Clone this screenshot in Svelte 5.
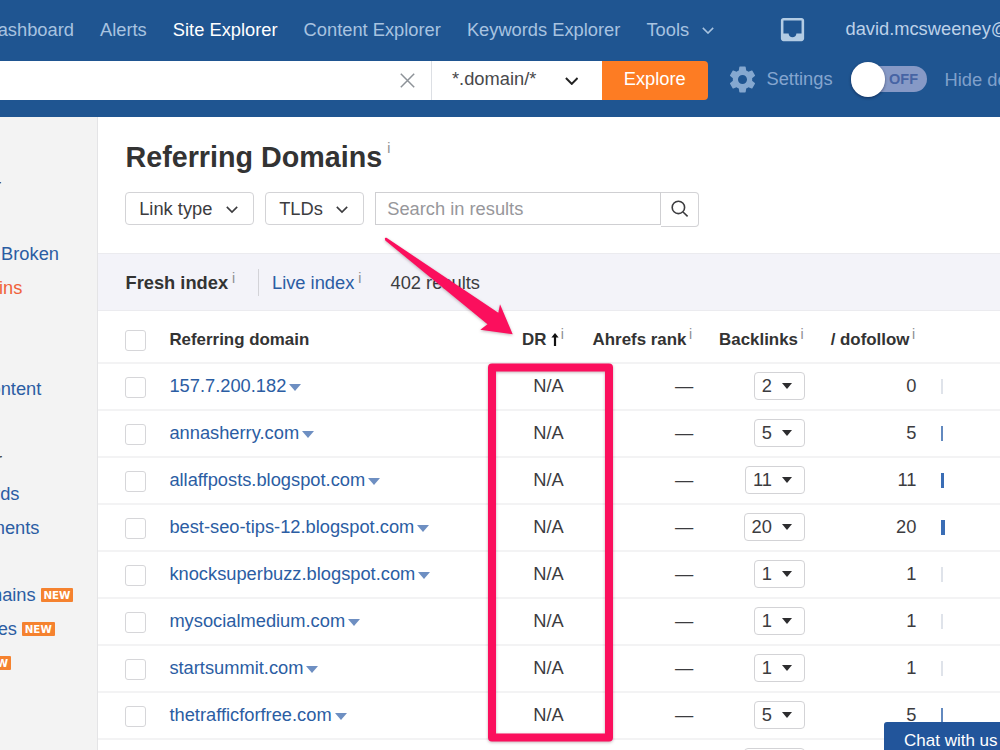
<script lang="ts">
  type Row = { domain: string; backlinks: number; dofollow: number };
  type SideItem = { text?: string; end: number; height?: number; kind?: string; badge?: boolean };

  const nav = ["Dashboard", "Alerts", "Site Explorer", "Content Explorer", "Keywords Explorer"];

  // end is the right edge of each label, the panel is scrolled to the left
  const sideItems: SideItem[] = [
    { text: "r", end: 1, kind: "heading", height: 37 },
    { end: 0, height: 33 },
    { text: "Broken", end: 59 },
    { text: "domains", end: 22.3, kind: "active" },
    { end: 0, height: 67.8 },
    { text: "content", end: 41.3 },
    { end: 0, height: 37 },
    { text: "r", end: 2, kind: "heading" },
    { text: "keywords", end: 19.5, height: 34.7 },
    { text: "Movements", end: 39.5, height: 34 },
    { end: 0, height: 33.3 },
    { text: "domains", end: 73.2, badge: true },
    { text: "es", end: 54.5, badge: true },
    { end: 10.8, badge: true },
  ];

  const rows: Row[] = [
    { domain: "157.7.200.182", backlinks: 2, dofollow: 0 },
    { domain: "annasherry.com", backlinks: 5, dofollow: 5 },
    { domain: "allaffposts.blogspot.com", backlinks: 11, dofollow: 11 },
    { domain: "best-seo-tips-12.blogspot.com", backlinks: 20, dofollow: 20 },
    { domain: "knocksuperbuzz.blogspot.com", backlinks: 1, dofollow: 1 },
    { domain: "mysocialmedium.com", backlinks: 1, dofollow: 1 },
    { domain: "startsummit.com", backlinks: 1, dofollow: 1 },
    { domain: "thetrafficforfree.com", backlinks: 5, dofollow: 5 },
    { domain: "", backlinks: 12, dofollow: 12 },
  ];

  function barWidth(n: number) {
    if (n > 15) return 4;
    if (n > 10) return 3;
    return n > 1 ? 1.7 : 1.5;
  }
</script>

{#snippet chevron(size: number)}
  <svg class="chevron" width={size} height={size * 0.6} viewBox="0 0 12 7.2">
    <path d="M.8.9 6 6.1 11.2.9" />
  </svg>
{/snippet}

<div class="page">
  <header>
    <nav>
      {#each nav as item}
        <a class:current={item === "Site Explorer"}>{item}</a>
      {/each}
      <a class="tools">Tools {@render chevron(12)}</a>
      <svg class="inbox" width="31" height="31" viewBox="0 0 24 24">
        <path d="M19 3H4.99c-1.11 0-1.98.89-1.98 2L3 19c0 1.1.88 2 1.99 2H19c1.1 0 2-.9 2-2V5c0-1.1-.9-2-2-2zm0 12h-4c0 1.66-1.35 3-3 3s-3-1.34-3-3H4.99V5H19v10z" />
      </svg>
      <span class="email">david.mcsweeney@</span>
    </nav>
    <div class="search-row">
      <div class="url-field">
        <svg width="15" height="15" viewBox="0 0 15 15">
          <path d="M.8.8 14.2 14.2M14.2.8.8 14.2" />
        </svg>
      </div>
      <div class="mode">*.domain/* {@render chevron(13.5)}</div>
      <button class="explore">Explore</button>
      <svg class="gear" width="31" height="31" viewBox="0 0 24 24">
        <path d="M19.43 12.98c.04-.32.07-.64.07-.98s-.03-.66-.07-.98l2.11-1.65c.19-.15.24-.42.12-.64l-2-3.46c-.12-.22-.39-.3-.61-.22l-2.49 1c-.52-.4-1.08-.73-1.69-.98l-.38-2.65C14.46 2.18 14.25 2 14 2h-4c-.25 0-.46.18-.49.42l-.38 2.65c-.61.25-1.17.59-1.69.98l-2.49-1c-.23-.09-.49 0-.61.22l-2 3.46c-.13.22-.07.49.12.64l2.11 1.65c-.04.32-.07.65-.07.98s.03.66.07.98l-2.11 1.65c-.19.15-.24.42-.12.64l2 3.46c.12.22.39.3.61.22l2.49-1c.52.4 1.08.73 1.69.98l.38 2.65c.03.24.24.42.49.42h4c.25 0 .46-.18.49-.42l.38-2.65c.61-.25 1.17-.59 1.69-.98l2.49 1c.23.09.49 0 .61-.22l2-3.46c.12-.22.07-.49-.12-.64l-2.11-1.65zM12 15.5c-1.93 0-3.5-1.57-3.5-3.5s1.57-3.5 3.5-3.5 3.5 1.57 3.5 3.5-1.57 3.5-3.5 3.5z" />
      </svg>
      <span class="settings">Settings</span>
      <div class="toggle"><span class="knob"></span><span class="state">OFF</span></div>
      <span class="hide">Hide details</span>
    </div>
  </header>

  <div class="body">
    <aside>
      {#each sideItems as item}
        <div class="side-item {item.kind ?? ''}" style:width="{item.end}px" style:height="{item.height ?? 33.7}px">
          {#if item.text}<span>{item.text}</span>{/if}
          {#if item.badge}<span class="badge">NEW</span>{/if}
        </div>
      {/each}
    </aside>

    <main>
      <h1>Referring Domains<sup>i</sup></h1>
      <div class="filters">
        <button class="filter link-type">Link type {@render chevron(12)}</button>
        <button class="filter tlds">TLDs {@render chevron(12)}</button>
        <div class="input">Search in results</div>
        <button class="find">
          <svg width="18" height="18" viewBox="0 0 18 18">
            <circle cx="7.4" cy="7.4" r="6.2" />
            <path d="m12 12 4.6 4.4" />
          </svg>
        </button>
      </div>

      <div class="index-bar">
        <span class="fresh">Fresh index<sup>i</sup></span>
        <span class="live">Live index<sup>i</sup></span>
        <span class="results">402 results</span>
      </div>

      <div class="grid head">
        <span class="checkbox"></span>
        <span>Referring domain</span>
        <span class="num dr">DR
          <svg width="8" height="13" viewBox="0 0 8 13"><path d="M4 0 7.6 4.6H5.1V13H2.9V4.6H.4z" /></svg><sup>i</sup>
        </span>
        <span class="num">Ahrefs rank<sup>i</sup></span>
        <span class="num">Backlinks<sup>i</sup></span>
        <span class="num">/ dofollow<sup>i</sup></span>
      </div>

      {#each rows as row}
        <div class="grid row">
          <span class="checkbox"></span>
          <a class="domain">{row.domain}<i class="caret"></i></a>
          <span class="num">N/A</span>
          <span class="num">—</span>
          <span class="num"><button class="count">{row.backlinks}<i class="caret"></i></button></span>
          <span class="num">{row.dofollow}</span>
          <span class="bar" class:faint={row.dofollow < 2} class:thin={row.dofollow === 5} style:width="{barWidth(row.dofollow)}px"></span>
        </div>
      {/each}
    </main>
  </div>

  <svg class="annotation" width="1000" height="750" viewBox="0 0 1000 750">
    <rect x="492" y="367.5" width="117" height="370" />
    <path d="M386.5 237.8 498.3 312.7 500 304.3 512.7 334.3 480.3 329.7 487.5 324.3 385.3 240.5Q384 237 386.5 237.8Z" />
  </svg>

  <div class="chat">Chat with us</div>
</div>

<style>
  :global(body) {
    overflow: hidden;
  }
  .page {
    position: relative;
    width: 1000px;
    height: 750px;
    overflow: hidden;
    display: flex;
    flex-direction: column;
    background: #fff;
    color: #3c3c3f;
    font-family: "Liberation Sans", Arial, sans-serif;
    font-size: 18.3px;
    white-space: nowrap;
  }
  button {
    font: inherit;
    color: inherit;
    margin: 0;
    padding: 0;
    background: #fff;
    box-sizing: border-box;
  }
  .chevron,
  .find svg,
  .url-field svg {
    fill: none;
    stroke: currentColor;
    stroke-width: 1.6;
  }

  header {
    height: 117px;
    flex-shrink: 0;
    background: #1f5591;
    color: #a8c3e0;
  }
  nav {
    height: 60.5px;
    display: flex;
    align-items: center;
    gap: 26.1px;
    margin-left: -15.5px;
  }
  nav .current {
    color: #fff;
  }
  .tools {
    display: flex;
    align-items: center;
    gap: 13px;
  }
  .tools .chevron {
    stroke-width: 1.5;
  }
  .inbox {
    fill: #b3cce4;
    margin: -1px 0 0 36.7px;
    flex-shrink: 0;
  }
  .email {
    color: #bdd1e8;
    margin: -2px 0 0 11.5px;
  }
  .search-row {
    height: 39.5px;
    display: flex;
    align-items: center;
  }
  .search-row > * {
    flex-shrink: 0;
  }
  .url-field {
    width: 431.5px;
    height: 100%;
    background: #fff;
    border-right: 1px solid #dcdfe4;
    box-sizing: border-box;
    color: #8d9298;
    display: flex;
    align-items: center;
    justify-content: flex-end;
    padding-right: 15.5px;
  }
  .url-field svg {
    stroke-width: 1.5;
  }
  .mode {
    width: 170.5px;
    height: 100%;
    padding: 0 24px 2px 20.5px;
    box-sizing: border-box;
    background: #fff;
    color: #48484b;
    display: flex;
    align-items: center;
    justify-content: space-between;
  }
  .mode .chevron {
    margin-top: 4px;
    color: #222;
    stroke-width: 1.8;
  }
  .explore {
    width: 105.5px;
    height: 100%;
    border: 0;
    border-radius: 0 4px 4px 0;
    background: #fd7c23;
    color: #fff;
    padding-bottom: 2px;
  }
  .gear {
    fill: #85a8d0;
    margin: -2px 0 0 19px;
  }
  .settings {
    color: #85a5cf;
    margin: -2px 0 0 9px;
  }
  .toggle {
    display: flex;
    align-items: center;
    height: 26px;
    width: 76px;
    margin: -2px 0 0 18px;
    border-radius: 13px;
    background: #8699c6;
  }
  .knob {
    width: 34.5px;
    height: 34.5px;
    flex-shrink: 0;
    border-radius: 50%;
    background: #fff;
    box-shadow: 0 1px 3px rgba(0, 0, 30, 0.45);
  }
  .state {
    font-size: 14.5px;
    font-weight: bold;
    color: #4664a4;
    margin-left: 4px;
  }
  .hide {
    color: #7fa0cb;
    margin-left: 18px;
  }

  .body {
    flex: 1;
    min-height: 0;
    display: flex;
  }
  aside {
    width: 98px;
    flex-shrink: 0;
    box-sizing: border-box;
    background: #f3f3f3;
    border-right: 1px solid #e4e4e6;
    padding-top: 50px;
  }
  .side-item {
    display: flex;
    align-items: center;
    justify-content: flex-end;
    gap: 5px;
    color: #2b5da3;
  }
  .side-item.active {
    color: #f0623a;
  }
  .side-item.heading {
    color: #333;
  }
  .badge {
    font: bold 10.3px/14px "DejaVu Sans", Verdana, sans-serif;
    width: 32.5px;
    flex-shrink: 0;
    text-align: center;
    background: #f5822f;
    color: #fff;
    border-radius: 1px;
  }

  main {
    flex: 1;
    min-width: 0;
  }
  h1 {
    margin: 0;
    padding: 23px 0 0 27.5px;
    font-size: 28.7px;
    line-height: 35px;
    color: #333;
  }
  sup {
    font-size: 14px;
    font-weight: normal;
    line-height: 1;
    vertical-align: baseline;
    position: relative;
    top: -5.5px;
    margin-left: 2.5px;
    color: #8c8c90;
  }
  h1 sup {
    top: -14px;
    margin-left: 5px;
  }
  .filters {
    display: flex;
    align-items: flex-start;
    padding: 17px 0 0 27.2px;
    height: 60.7px;
    box-sizing: border-box;
  }
  .filter {
    display: flex;
    align-items: center;
    justify-content: space-between;
    height: 33px;
    padding: 0 15px 0 13px;
    border: 1px solid #d3d3d6;
    border-radius: 4px;
    margin-right: 11.5px;
  }
  .link-type {
    width: 128.5px;
  }
  .tlds {
    width: 98.5px;
  }
  .filter .chevron {
    margin-top: 3px;
  }
  .input {
    box-sizing: border-box;
    width: 286px;
    height: 33px;
    line-height: 31px;
    padding-left: 11px;
    border: 1px solid #cfcfd2;
    color: #97979b;
  }
  .find {
    width: 38px;
    height: 34.5px;
    border: 1px solid #d3d3d6;
    border-left: 0;
    border-radius: 0 4px 4px 0;
    display: flex;
    align-items: center;
    justify-content: center;
  }
  .index-bar {
    height: 57.5px;
    margin-top: 17.6px;
    padding-left: 27.5px;
    box-sizing: border-box;
    display: flex;
    align-items: center;
    background: #f3f3f9;
    border-top: 1px solid #ebebef;
    border-bottom: 1px solid #ebebef;
  }
  .fresh {
    width: 133.5px;
    box-sizing: border-box;
    line-height: 27px;
    border-right: 1px solid #d3d3d8;
    font-weight: bold;
    color: #333;
  }
  .live {
    width: 131.5px;
    line-height: 27px;
    padding-left: 13px;
    box-sizing: border-box;
    color: #2b5da3;
  }
  .fresh sup,
  .live sup {
    margin-left: 4px;
  }
  .results {
    line-height: 27px;
  }

  .grid {
    display: grid;
    grid-template-columns: 44px 311px 84px 129px 111.5px 111.5px 1fr;
    align-items: center;
    box-sizing: border-box;
    padding-left: 27.4px;
    padding-bottom: 1.5px;
    height: 47px;
    border-bottom: 2px solid #f3f3f4;
  }
  .head {
    height: 53.5px;
    padding-bottom: 0;
    padding-top: 6.5px;
    font-size: 16.9px;
    font-weight: bold;
    color: #333;
  }
  .head .num {
    margin-right: 1.3px;
  }
  .checkbox {
    width: 21px;
    height: 21px;
    box-sizing: border-box;
    border: 1px solid #d6d6d9;
    border-radius: 3px;
    margin-top: 2px;
    background: #fff;
  }
  .num {
    text-align: right;
  }
  .row .num:nth-child(3) {
    margin-right: 0.6px;
  }
  .dr svg {
    fill: #111;
    vertical-align: -1px;
    margin-right: -1px;
  }
  .head .dr {
    margin-right: 0.6px;
  }
  .domain {
    color: #2b5da3;
  }
  .caret {
    display: inline-block;
    border: 6px solid transparent;
    border-top: 7px solid #6e8fc2;
    border-bottom: 0;
    margin-left: 3px;
    vertical-align: 1px;
  }
  .count {
    display: inline-block;
    height: 28px;
    border: 1px solid #d3d3d6;
    border-radius: 4px;
    padding: 0 12px 1px 7px;
    vertical-align: middle;
  }
  .count .caret {
    border-width: 6px 5px 0;
    border-top-color: #2d2d2f;
    margin-left: 10px;
    vertical-align: 3px;
  }
  .bar {
    height: 15px;
    margin: 1px 0 0 25px;
    background: #3a6db5;
  }
  .bar.thin {
    background: #6289bf;
  }
  .bar.faint {
    background: #dfe3ea;
  }

  .annotation {
    position: absolute;
    top: 0;
    left: 0;
    pointer-events: none;
    filter: drop-shadow(0 1px 1.5px rgba(60, 0, 20, 0.3));
  }
  .annotation rect {
    fill: none;
    stroke: #fb0f5d;
    stroke-width: 8;
    stroke-linejoin: round;
  }
  .annotation path {
    fill: #fb0f5d;
  }
  .chat {
    position: absolute;
    left: 884px;
    bottom: 0;
    width: 130px;
    height: 28px;
    box-sizing: border-box;
    padding: 9px 0 0 20px;
    font-size: 17px;
    line-height: 20px;
    background: #22559b;
    color: #fff;
    border-radius: 3px 0 0 0;
  }
</style>
